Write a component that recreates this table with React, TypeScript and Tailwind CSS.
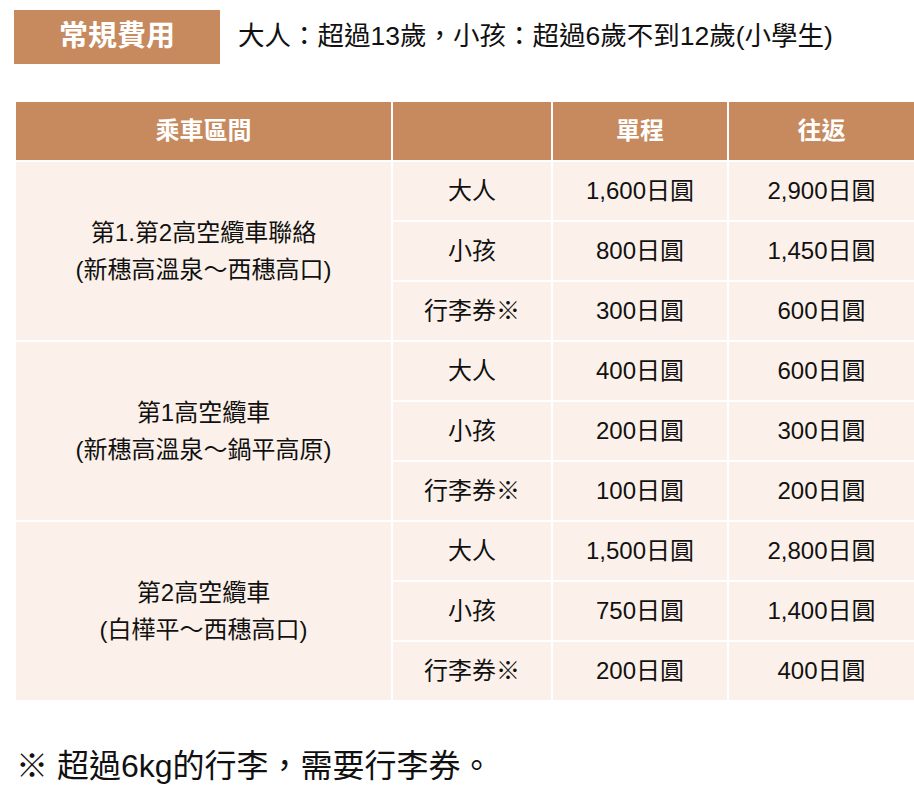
const groups = [
  {
    title: "第1.第2高空纜車聯絡",
    sub: "(新穗高溫泉～西穗高口)",
    rows: [
      ["大人", "1,600日圓", "2,900日圓"],
      ["小孩", "800日圓", "1,450日圓"],
      ["行李券※", "300日圓", "600日圓"],
    ],
  },
  {
    title: "第1高空纜車",
    sub: "(新穗高溫泉～鍋平高原)",
    rows: [
      ["大人", "400日圓", "600日圓"],
      ["小孩", "200日圓", "300日圓"],
      ["行李券※", "100日圓", "200日圓"],
    ],
  },
  {
    title: "第2高空纜車",
    sub: "(白樺平～西穗高口)",
    rows: [
      ["大人", "1,500日圓", "2,800日圓"],
      ["小孩", "750日圓", "1,400日圓"],
      ["行李券※", "200日圓", "400日圓"],
    ],
  },
];

const font = {
  fontFamily: '"Liberation Sans", "Noto Sans CJK TC", sans-serif',
};

export default function App() {
  return (
    <div className="w-[914px] h-[794px] bg-white text-[#111]" style={font}>
      {/* title row */}
      <div className="flex items-center pt-[10px] pl-[14px]">
        <div className="w-[206px] h-[54px] bg-[#c68a5e] text-white text-[29px] font-bold flex items-center justify-center">
          常規費用
        </div>
        <div className="ml-[18px] text-[26.5px]">大人：超過13歲，小孩：超過6歲不到12歲(小學生)</div>
      </div>

      {/* fare table */}
      <table className="mt-[36px] ml-[14px] w-[900px] table-fixed border-collapse text-[24px]">
        <colgroup>
          <col className="w-[377px]" />
          <col className="w-[160px]" />
          <col className="w-[176px]" />
          <col className="w-[187px]" />
        </colgroup>
        <thead>
          <tr className="h-[60px] bg-[#c68a5e] text-white font-bold">
            <th className="border-2 border-white font-bold">乘車區間</th>
            <th className="border-2 border-white"></th>
            <th className="border-2 border-white font-bold">單程</th>
            <th className="border-2 border-white font-bold">往返</th>
          </tr>
        </thead>
        <tbody className="bg-[#fcf1ea]">
          {groups.map((g) =>
            g.rows.map((r, i) => (
              <tr key={g.title + i} className="h-[60px]">
                {i === 0 && (
                  <td rowSpan={3} className="border-2 border-white text-center leading-[37px]">
                    <div>{g.title}</div>
                    <div>{g.sub}</div>
                  </td>
                )}
                {r.map((c, j) => (
                  <td key={j} className="border-2 border-white text-center">
                    {c}
                  </td>
                ))}
              </tr>
            ))
          )}
        </tbody>
      </table>

      <div className="mt-[40px] pl-[16px] text-[32px]">※ 超過6kg的行李，需要行李券。</div>
    </div>
  );
}
